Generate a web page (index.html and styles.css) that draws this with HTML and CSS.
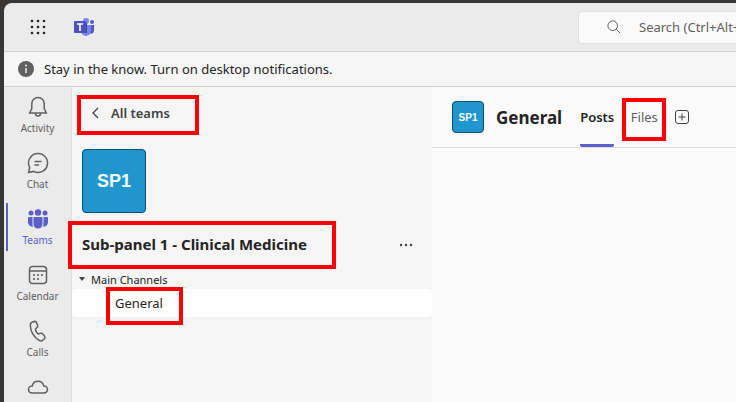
FILE: index.html
```html
<!DOCTYPE html>
<html lang="en">
<head>
    <meta charset="UTF-8">
    <meta name="viewport" content="width=device-width, initial-scale=1.0">
    <title>General | Teams</title>
    <link rel="stylesheet" href="styles.css">
</head>
<body>
    <div class="app">

        <!-- Top bar -->
        <header class="topbar">
            <button class="icon-button" aria-label="Apps">
                <svg width="16" height="16" viewBox="0 0 16 16" fill="#242424">
                    <circle cx="2" cy="2" r="1.3"/><circle cx="8" cy="2" r="1.3"/><circle cx="14" cy="2" r="1.3"/>
                    <circle cx="2" cy="8" r="1.3"/><circle cx="8" cy="8" r="1.3"/><circle cx="14" cy="8" r="1.3"/>
                    <circle cx="2" cy="14" r="1.3"/><circle cx="8" cy="14" r="1.3"/><circle cx="14" cy="14" r="1.3"/>
                </svg>
            </button>
            <svg class="logo" width="20" height="18" viewBox="0 0 20 18">
                <circle cx="18" cy="4" r="2" fill="#5059c9"/>
                <path d="M15 7h5v6a3 3 0 0 1-5 2z" fill="#5059c9"/>
                <circle cx="12" cy="3" r="3" fill="#7b83eb"/>
                <path d="M7 7h10v6a5 5 0 0 1-10 0z" fill="#7b83eb"/>
                <path d="M8 5h5v10H8z" fill="#3d4299"/>
                <rect y="3" width="12" height="12" rx="1" fill="#4b53bc"/>
                <path d="M3 6h6M6 6v7" stroke="#fff" stroke-width="1.6"/>
            </svg>
            <label class="search">
                <svg width="14" height="14" viewBox="0 0 14 14" fill="none" stroke="#616161">
                    <circle cx="5.7" cy="5.7" r="4.8"/>
                    <path d="M9.2 9.2l4 4"/>
                </svg>
                <input type="text" placeholder="Search (Ctrl+Alt+E)" aria-label="Search">
            </label>
        </header>

        <!-- Notification bar -->
        <div class="notice">
            <svg width="16" height="16" viewBox="0 0 16 16">
                <circle cx="8" cy="8" r="8" fill="#616161"/>
                <circle cx="8" cy="4.6" r="1" fill="#f5f5f5"/>
                <path d="M8 7v5" stroke="#f5f5f5" stroke-width="1.4"/>
            </svg>
            <span>Stay in the know. Turn on desktop notifications.</span>
        </div>

        <div class="content">

            <!-- App rail -->
            <nav class="rail">
                <a class="rail-item" href="#">
                    <svg width="24" height="24" viewBox="0 0 24 24">
                        <path d="M12 2.5a6.2 6.2 0 0 0-6.2 6.2v5L3.7 18h16.6l-2.1-4.3v-5A6.2 6.2 0 0 0 12 2.5z"/>
                        <path d="M9.5 18.5a2.5 2.5 0 0 0 5 0"/>
                    </svg>
                    <span>Activity</span>
                </a>
                <a class="rail-item" href="#">
                    <svg width="24" height="24" viewBox="0 0 24 24">
                        <path d="M12 2.5a9.5 9.5 0 1 1-4.4 17.9L2.6 21.5l1.1-5A9.5 9.5 0 0 1 12 2.5z"/>
                        <path d="M8.5 10.5h7M8.5 14h4.5"/>
                    </svg>
                    <span>Chat</span>
                </a>
                <a class="rail-item active" href="#">
                    <svg width="24" height="24" viewBox="0 0 24 24">
                        <circle cx="12" cy="5.5" r="3.2"/>
                        <circle cx="5" cy="6" r="2.5"/>
                        <circle cx="19" cy="6" r="2.5"/>
                        <path d="M8.5 10h7a1 1 0 0 1 1 1v6a4.500 4.500 0 0 1-9 0v-6a1 1 0 0 1 1-1z"/>
                        <path d="M3 10h3.500v7q0 1.500.6 2.800A4.800 4.800 0 0 1 2 15.500V11a1 1 0 0 1 1-1z"/>
                        <path d="M21 10h-3.500v7q0 1.500-.6 2.800a4.800 4.800 0 0 0 5.100-4.300V11a1 1 0 0 0-1-1z"/>
                    </svg>
                    <span>Teams</span>
                </a>
                <a class="rail-item" href="#">
                    <svg width="24" height="24" viewBox="0 0 24 24">
                        <rect x="3.5" y="3.5" width="17" height="17" rx="3"/>
                        <path d="M3.5 8h17"/>
                        <g class="dots">
                            <circle cx="8" cy="12" r="1.1"/><circle cx="12" cy="12" r="1.1"/><circle cx="16" cy="12" r="1.1"/>
                            <circle cx="8" cy="16" r="1.1"/><circle cx="12" cy="16" r="1.1"/>
                        </g>
                    </svg>
                    <span>Calendar</span>
                </a>
                <a class="rail-item" href="#">
                    <svg width="24" height="24" viewBox="0 0 24 24">
                        <path d="M6.5 3l1.6-.5a2 2 0 0 1 2.4 1.1l1.1 2.6a2 2 0 0 1-.5 2.3L9.4 10c.2 1.5 1.7 4.3 3.1 5l2.3-.7a2 2 0 0 1 2.200.8l1.6 2.2a2 2 0 0 1-.3 2.6l-1.2 1.1c-1.200 1.1-3 1.2-4.3.2C8 18 4.5 12 4.3 6.3A3.3 3.3 0 0 1 6.5 3z"/>
                    </svg>
                    <span>Calls</span>
                </a>
                <a class="rail-item" href="#" aria-label="OneDrive">
                    <svg width="24" height="24" viewBox="0 0 24 24">
                        <path d="M6 18a3.5 3.5 0 0 1 0-7h.3a5.8 5.8 0 0 1 11.4 0h.3a3.5 3.5 0 0 1 0 7z"/>
                    </svg>
                </a>
            </nav>

            <!-- Channel list -->
            <aside class="channels">
                <button class="back marked">
                    <svg width="8" height="12" viewBox="0 0 8 12" fill="none" stroke="#424242" stroke-width="1.3">
                        <path d="M7 1L2 6l5 5"/>
                    </svg>
                    All teams
                </button>
                <div class="avatar avatar-large">SP1</div>
                <div class="team-row">
                    <h1 class="team-name marked">Sub-panel 1 - Clinical Medicine</h1>
                    <button class="icon-button" aria-label="More options">
                        <svg width="14" height="4" viewBox="0 0 14 4" fill="#424242">
                            <circle cx="2" cy="2" r="1.2"/><circle cx="7" cy="2" r="1.2"/><circle cx="12" cy="2" r="1.2"/>
                        </svg>
                    </button>
                </div>
                <button class="section">
                    <svg width="6" height="4" viewBox="0 0 6 4" fill="#424242"><path d="M0 0h6L3 4z"/></svg>
                    Main Channels
                </button>
                <a class="channel" href="#"><span class="marked">General</span></a>
            </aside>

            <!-- Channel view -->
            <main class="view">
                <div class="view-header">
                    <div class="avatar avatar-small">SP1</div>
                    <h2>General</h2>
                    <nav class="tabs">
                        <a class="tab selected" href="#">Posts</a>
                        <a class="tab" href="#"><span class="marked">Files</span></a>
                        <button class="icon-button" aria-label="Add a tab">
                            <svg width="14" height="14" viewBox="0 0 14 14" fill="none" stroke="#424242">
                                <rect x=".5" y=".5" width="13" height="13" rx="2.5"/>
                                <path d="M7 3.5v7M3.5 7h7"/>
                            </svg>
                        </button>
                    </nav>
                </div>
            </main>
        </div>
    </div>
</body>
</html>
```

FILE: styles.css
```css
* {
    box-sizing: border-box;
}
body {
    margin: 0;
    padding: 3px 0 0 4px;
    height: 100vh;
    overflow: hidden;
    background-color: #393736;
    color: #242424;
    font-family: "Noto Sans", "Open Sans", sans-serif;
    font-size: 13px;
}
a {
    color: inherit;
    text-decoration: none;
}
button {
    margin: 0;
    padding: 0;
    border: none;
    background: none;
    color: inherit;
    font: inherit;
    cursor: pointer;
}
svg {
    display: block;
    flex: none;
}
.app {
    display: flex;
    flex-direction: column;
    height: 100%;
    overflow: hidden;
    border-top-left-radius: 8px;
    background-color: #ebebeb;
}

/* Top bar */
.topbar {
    display: flex;
    align-items: center;
    flex: none;
    height: 49px;
    padding-left: 26px;
    border-bottom: 1px solid #d1d1d1;
}
.logo {
    margin-left: 28px;
}
.search {
    display: flex;
    align-items: center;
    gap: 18px;
    height: 33px;
    margin-left: auto;
    padding-left: 28px;
    border: 1px solid #e0e0e0;
    border-right: none;
    border-radius: 4px 0 0 4px;
    background-color: #fafafa;
}
.search input {
    width: 97px;
    padding: 0;
    border: none;
    outline: none;
    background: none;
    font: inherit;
}
.search input::placeholder {
    color: #616161;
}

/* Notification bar */
.notice {
    display: flex;
    align-items: center;
    flex: none;
    gap: 10px;
    height: 35px;
    padding-left: 14px;
    border-bottom: 1px solid #d1d1d1;
    background-color: #f5f5f5;
}

.content {
    display: flex;
    flex: 1;
    min-height: 0;
}

/* App rail */
.rail {
    flex: none;
    width: 68px;
    border-right: 1px solid #e0e0e0;
}
.rail-item {
    display: flex;
    flex-direction: column;
    align-items: center;
    height: 48px;
    margin: 4px 0 8px 2px;
    padding: 4px 4px 0 0;
    border-left: 2px solid transparent;
    color: #616161;
    font-size: 10px;
    line-height: 18px;
}
.rail-item svg {
    fill: none;
    stroke: #616161;
    stroke-width: 1.5;
}
.rail-item .dots {
    fill: #616161;
    stroke: none;
}
.rail-item.active {
    border-left-color: #5b5fc7;
    color: #5b5fc7;
}
.rail-item.active svg {
    fill: #5b5fc7;
    stroke: none;
}

/* Red frames */
.marked {
    border: 4px solid #ff0000;
}

/* Channel list */
.channels {
    flex: none;
    width: 360px;
    padding-top: 8px;
    background-color: #f5f5f5;
}
.back {
    display: flex;
    align-items: center;
    gap: 12px;
    width: 122px;
    height: 40px;
    margin-left: 5px;
    padding: 0 0 4px 10px;
    color: #424242;
    font-weight: 600;
}
.avatar {
    display: flex;
    align-items: center;
    justify-content: center;
    border: 1px solid #0b4e73;
    border-radius: 4px;
    background-color: #2096cd;
    color: #f0fbff;
    font-family: "Liberation Sans", Arial, sans-serif;
    font-weight: bold;
}
.avatar-large {
    width: 64px;
    height: 64px;
    margin: 14px 0 8px 10px;
    font-size: 18px;
}
.avatar-small {
    width: 32px;
    height: 32px;
    font-size: 10px;
}
.team-row {
    display: flex;
    align-items: center;
    justify-content: space-between;
    padding-right: 19px;
}
.team-name {
    width: 268px;
    height: 48px;
    margin: 0 0 0 -4px;
    padding-left: 10px;
    font-size: 15px;
    font-weight: 700;
    line-height: 38px;
    white-space: nowrap;
}
.section {
    display: flex;
    align-items: center;
    gap: 6px;
    height: 20px;
    padding-left: 7px;
    font-size: 11px;
}
.channel {
    display: flex;
    align-items: center;
    height: 28px;
    padding-left: 34px;
    border-radius: 4px;
    background-color: #ffffff;
}
.channel .marked {
    flex: none;
    width: 77px;
    height: 38px;
    margin-bottom: -5px;
    padding-left: 5px;
    line-height: 24px;
}

/* Channel view */
.view {
    flex: 1;
    min-width: 0;
    background-color: #fafafa;
}
.view-header {
    display: flex;
    align-items: center;
    height: 61px;
    padding-left: 20px;
    border-bottom: 1px solid #e0e0e0;
}
.view-header h2 {
    margin: 0 18px 0 12px;
    font-size: 17px;
    font-weight: 700;
}
.tabs {
    display: flex;
    align-items: center;
    align-self: stretch;
}
.tab {
    display: flex;
    align-items: center;
    align-self: stretch;
    color: #616161;
}
.tab.selected {
    margin-right: 8px;
    padding-top: 3px;
    border-bottom: 3px solid #5b5fc7;
    border-radius: 2px;
    color: #242424;
    font-weight: 600;
}
.tab .marked {
    width: 44px;
    height: 43px;
    margin: 4px 9px 0 0;
    line-height: 31px;
    text-align: center;
}
```
